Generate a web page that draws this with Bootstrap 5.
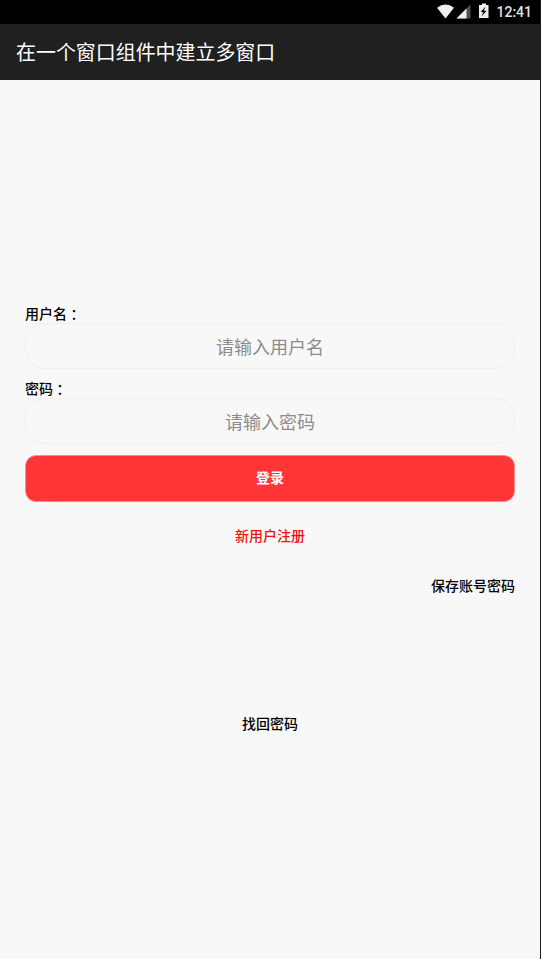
<!DOCTYPE html>
<html lang="zh-CN">
<head>
<meta charset="utf-8">
<meta name="viewport" content="width=device-width, initial-scale=1">
<title>在一个窗口组件中建立多窗口</title>
<link href="https://cdn.jsdelivr.net/npm/bootstrap@5.3.0/dist/css/bootstrap.min.css" rel="stylesheet">
<style>
  body { font-family: Roboto, "Noto Sans CJK SC", sans-serif; background: #f8f8f8; color: #000; font-size: 14px; font-weight: 500; }
  .screen { height: 959px; border-right: 1px solid #1c1c1c; }
  .status-bar { height: 24px; background: #000; color: #e0e0e0; padding-right: 8px; }
  .status-bar .clock { font-size: 14px; line-height: 24px; margin-left: 6px; }
  .app-bar { height: 56px; background: #202020; padding: 0 16px; }
  .app-title { font-size: 19.95px; font-weight: 400; line-height: 28px; color: #fff; font-family: "Noto Sans CJK SC", sans-serif; }
  .login-form { padding: 225px 25px 0; }
  .field-label { line-height: 16px; height: 18px; font-family: "Noto Sans CJK SC", sans-serif; }
  .colon { font-family: "Noto Sans CJK TC", sans-serif; vertical-align: -1px; line-height: 1; }
  .field { height: 46px; border: 1px solid #efefef; border-radius: 20px; background: transparent; font-size: 18px; line-height: 26px; font-weight: 400; font-family: "Noto Sans CJK SC", sans-serif; }
  .field::placeholder { color: #8c8c8c; opacity: 1; }
  .field-label.second { margin-top: 11px; }
  .btn-login { height: 47px; margin-top: 11px; background: #ff3538; border: 1px solid #ff898b; border-radius: 11px; color: #fff; font-size: 14px; font-weight: 700; line-height: 18px; padding-top: 4px; }
  .text-link { line-height: 20px; color: #000; }
  .text-link.register { margin-top: 24px; color: #f00f0f; }
  .save { margin-top: 30px; }
  .recover { margin-top: 118px; }
</style>
<script src="https://cdn.jsdelivr.net/npm/bootstrap@5.3.0/dist/js/bootstrap.bundle.min.js"></script>
</head>
<body>
<div class="screen d-flex flex-column">
  <div class="status-bar d-flex align-items-center justify-content-end">
    <svg width="54" height="24" viewBox="0 0 54 24" aria-hidden="true">
      <path d="M1 7.800Q9.500 1 18 7.800L9.500 18.500z" fill="#eee"/>
      <path d="M34.500 4.500V18.500H20.500z" fill="#505050"/>
      <path d="M30.500 8.500V18.500H20.500z" fill="#eee"/>
      <path d="M43 5h3V3.500h4V5h2.500v13H43z" fill="#eee"/>
      <path d="M49.500 6.500L44.700 12h2.600L45.500 16.500l5-5.800h-2.700z" fill="#000"/>
    </svg>
    <span class="clock">12:41</span>
  </div>
  <header class="app-bar d-flex align-items-center">
    <h1 class="app-title mb-0">在一个窗口组件中建立多窗口</h1>
  </header>
  <main>
    <form class="login-form d-flex flex-column">
      <label class="field-label" for="user">用户名<span class="colon" lang="zh-TW">：</span></label>
      <input class="field form-control text-center shadow-none" id="user" type="text" placeholder="请输入用户名">
      <label class="field-label second" for="pass">密码<span class="colon" lang="zh-TW">：</span></label>
      <input class="field form-control text-center shadow-none" id="pass" type="password" placeholder="请输入密码">
      <button class="btn btn-login w-100" type="button">登录</button>
      <a class="text-link register align-self-center text-decoration-none" href="#">新用户注册</a>
      <a class="text-link save align-self-end text-decoration-none" href="#">保存账号密码</a>
      <a class="text-link recover align-self-center text-decoration-none" href="#">找回密码</a>
    </form>
  </main>
</div>
</body>
</html>
